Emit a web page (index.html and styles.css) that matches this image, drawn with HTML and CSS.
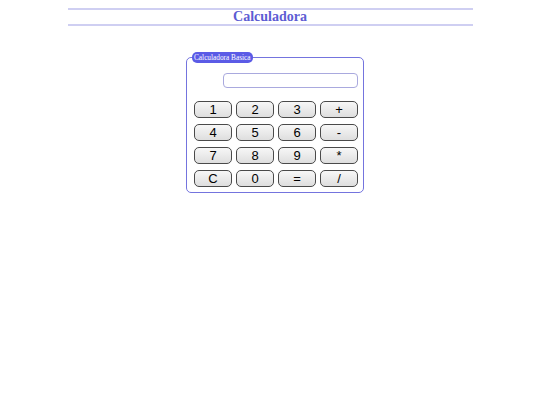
FILE: index.html
```html
<!DOCTYPE html>
<html>
<head>
<meta charset="utf-8">
<link rel="stylesheet" href="styles.css">
</head>
<body>
<h1 class="title">Calculadora</h1>
<div class="wrap">
<fieldset class="calc">
<legend class="calc-legend">Calculadora Basica</legend>
<div class="display-row"><input class="display" type="text"></div>
<div class="keys">
<button class="key">1</button><button class="key">2</button><button class="key">3</button><button class="key">+</button>
<button class="key">4</button><button class="key">5</button><button class="key">6</button><button class="key">-</button>
<button class="key">7</button><button class="key">8</button><button class="key">9</button><button class="key">*</button>
<button class="key">C</button><button class="key">0</button><button class="key">=</button><button class="key">/</button>
</div>
</fieldset>
</div>
</body>
</html>
```
FILE: styles.css
```css
html, body { background: #fff; }
body { margin: 8px; font-family: "Liberation Serif", serif; }
.title {
  width: 405px;
  margin: 0 auto;
  border-top: 2px solid #cfcff2;
  border-bottom: 2px solid #cfcff2;
  text-align: center;
  font-size: 14px;
  line-height: 14px;
  color: #5d5dd3;
  font-weight: bold;
}
.wrap { margin-top: 26px; padding-left: 178px; }
.calc {
  width: 177px;
  box-sizing: border-box;
  margin: 0;
  padding: 10px 5px 5px 7px;
  border: 1px solid #7474de;
  border-radius: 5px;
}
.calc-legend {
  background: #5b5be6;
  color: #fff;
  font-size: 7.3px;
  font-weight: normal;
  line-height: 11px;
  padding: 0 2px;
  border-radius: 5px;
  margin-left: -2px;
}
.display-row { display: flex; justify-content: flex-end; }
.display {
  width: 135px;
  height: 15px;
  box-sizing: border-box;
  border: 1px solid #a9a9de;
  border-radius: 4px;
  padding: 0;
  margin: 0;
  outline: none;
}
.keys {
  margin-top: 13px;
  display: grid;
  grid-template-columns: repeat(4, 38px);
  grid-auto-rows: 17px;
  column-gap: 4px;
  row-gap: 6px;
}
.key {
  box-sizing: border-box;
  margin: 0;
  padding: 0;
  border: 1px solid #4a4a4a;
  border-radius: 5px;
  background: linear-gradient(#f7f7f7, #dedede);
  font-family: "Liberation Sans", Arial, sans-serif;
  font-size: 13px;
  line-height: 15px;
  color: #000;
}
```
